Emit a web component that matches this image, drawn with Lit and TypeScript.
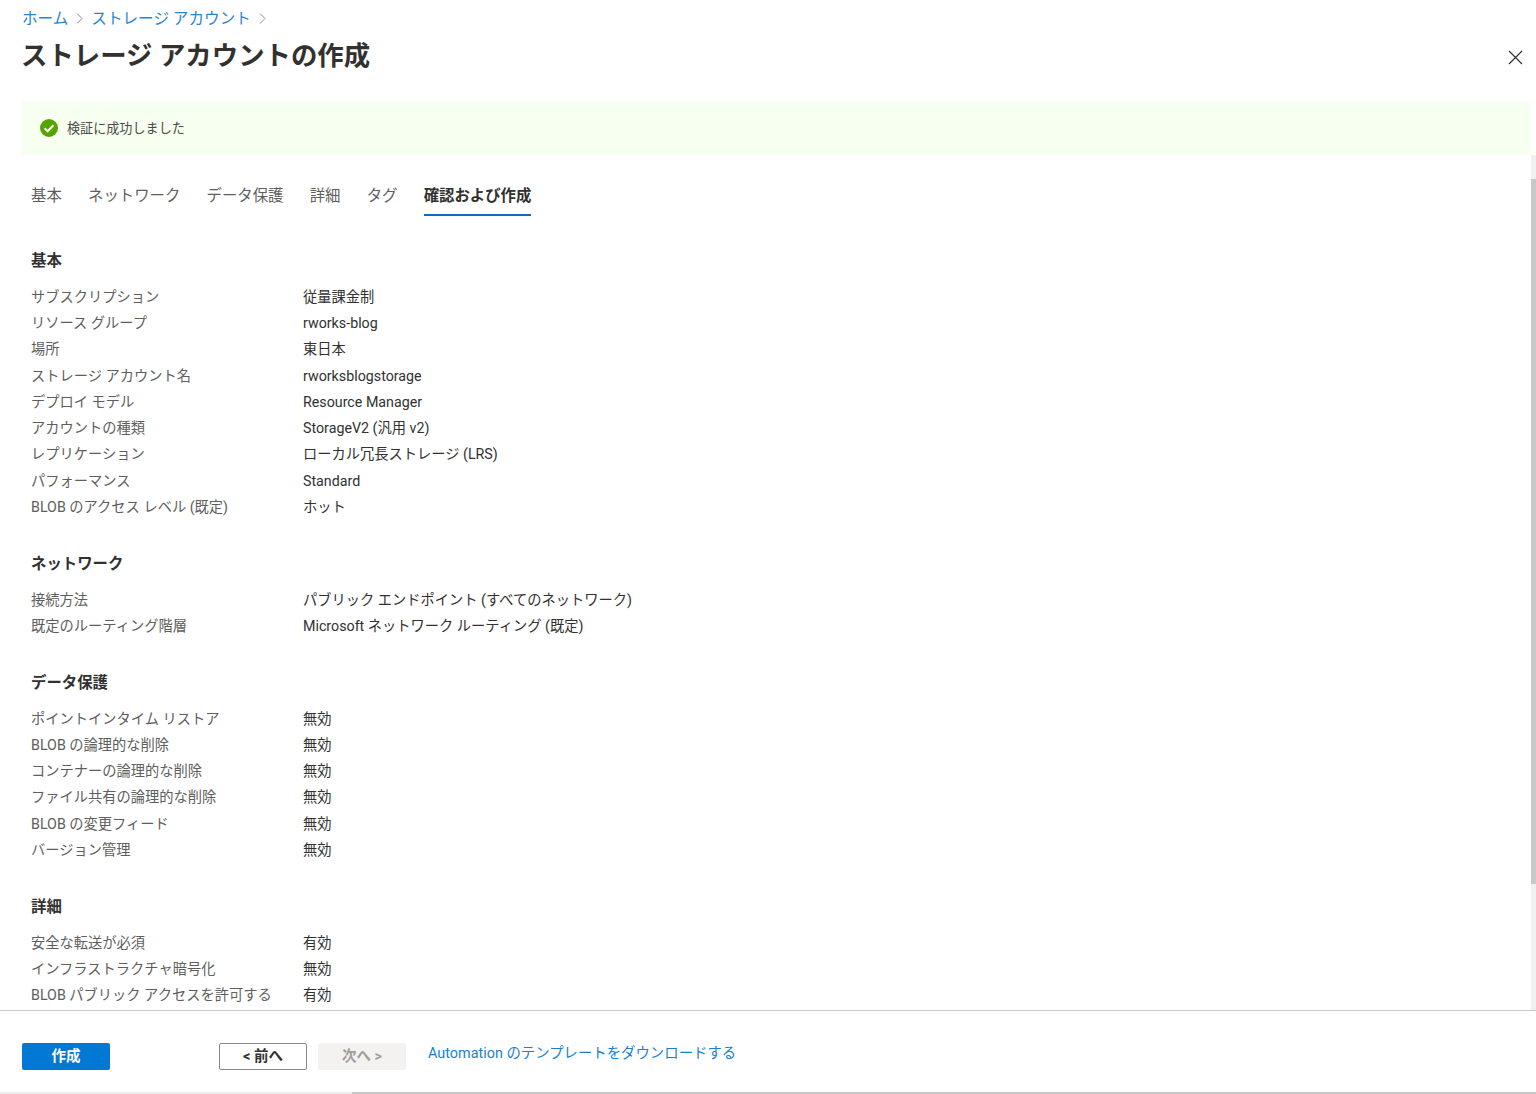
import { LitElement, html, css } from "lit";
import { customElement } from "lit/decorators.js";

type Row = [string, string];
const sections: { title: string; rows: Row[] }[] = [
  { title: "基本", rows: [
    ["サブスクリプション", "従量課金制"],
    ["リソース グループ", "rworks-blog"],
    ["場所", "東日本"],
    ["ストレージ アカウント名", "rworksblogstorage"],
    ["デプロイ モデル", "Resource Manager"],
    ["アカウントの種類", "StorageV2 (汎用 v2)"],
    ["レプリケーション", "ローカル冗長ストレージ (LRS)"],
    ["パフォーマンス", "Standard"],
    ["BLOB のアクセス レベル (既定)", "ホット"],
  ]},
  { title: "ネットワーク", rows: [
    ["接続方法", "パブリック エンドポイント (すべてのネットワーク)"],
    ["既定のルーティング階層", "Microsoft ネットワーク ルーティング (既定)"],
  ]},
  { title: "データ保護", rows: [
    ["ポイントインタイム リストア", "無効"],
    ["BLOB の論理的な削除", "無効"],
    ["コンテナーの論理的な削除", "無効"],
    ["ファイル共有の論理的な削除", "無効"],
    ["BLOB の変更フィード", "無効"],
    ["バージョン管理", "無効"],
  ]},
  { title: "詳細", rows: [
    ["安全な転送が必須", "有効"],
    ["インフラストラクチャ暗号化", "無効"],
    ["BLOB パブリック アクセスを許可する", "有効"],
  ]},
];
const tabs = ["基本", "ネットワーク", "データ保護", "詳細", "タグ", "確認および作成"];

@customElement("app-root")
export class AppRoot extends LitElement {
  static styles = css`
    :host {
      display: flex; flex-direction: column; width: 1536px; height: 1094px; overflow: hidden;
      background: #fff; color: #323130;
      font-family: Roboto, "Noto Sans CJK JP", sans-serif;
    }
    .head { padding: 0 0 0 22px; height: 101px; display: flex; flex-direction: column; position: relative; flex: none; }
    .crumbs { display: flex; align-items: center; height: 20px; margin-top: 7px; font-size: 15.6px; color: #2a84d2; }
    .crumbs svg { margin: 3px 8px 0 8px; }
    h1 { margin: 11px 0 0 -1px; font-size: 26.4px; line-height: 36px; font-weight: 700; color: #323130; }
    .close { position: absolute; right: 13px; top: 50px; }
    .banner {
      flex: none; height: 54px; margin: 0 5px 0 22px; background: #f7fff1;
      display: flex; align-items: center; padding-left: 18px; gap: 9px;
      font-size: 13.1px; line-height: 18px; color: #4a4a48;
    }
    .banner span { padding-top: 1px; }
    .main { flex: 1; min-height: 0; display: flex; }
    .content { flex: 1; min-width: 0; overflow: hidden; padding: 26px 0 0 31px; }
    .track { flex: none; width: 5px; background: #f0f0f0; padding-top: 24px; box-sizing: border-box; }
    .thumb { height: 705px; background: #c8c8c8; }
    .tabs { display: flex; gap: 26.2px; height: 35px; font-size: 15.4px; color: #605e5c; }
    .tab { height: 35px; line-height: 31px; box-sizing: border-box; }
    .tab.on { font-weight: 700; color: #323130; border-bottom: 2px solid #0f6cbd; }
    section { margin-bottom: 30.3px; }
    section:first-of-type { margin-top: 31.7px; }
    h2 { margin: 0 0 10px; font-size: 15.4px; line-height: 26px; font-weight: 700; color: #323130; }
    .row { display: grid; grid-template-columns: 272px 1fr; height: 26.3px; line-height: 26.3px; font-size: 14.25px; white-space: nowrap; }
    .k { color: #605e5c; }
    .v { color: #323130; }
    .foot {
      flex: none; height: 82px; box-sizing: border-box; border-top: 1px solid #c9c9c9;
      display: flex; align-items: flex-start; padding: 32px 0 0 22px;
    }
    .btn {
      width: 88px; height: 27px; box-sizing: border-box; border-radius: 2px;
      display: flex; align-items: center; justify-content: center; padding-bottom: 5px;
      font-size: 14.5px; font-weight: 700;
    }
    .primary { background: #0078d4; color: #fff; margin-right: 109px; }
    .secondary { background: #fff; border: 1px solid #8a8886; color: #323130; margin-right: 11px; }
    .disabled { background: #f3f2f1; color: #a19f9d; margin-right: 22px; }
    .link { font-size: 14.4px; color: #1a7fd0; line-height: 22px; }
    .bottom { flex: none; height: 2px; display: flex; }
    .bottom .a { width: 352px; background: #eeeeee; }
    .bottom .b { flex: 1; background: #c6c6c6; }
  `;

  render() {
    return html`
      <div class="head">
        <div class="crumbs">
          <span>ホーム</span>
          <svg width="7" height="11" viewBox="0 0 7 11" fill="none" stroke="#8a8886" stroke-width="1"><path d="M1 .5l5 5-5 5"/></svg>
          <span>ストレージ アカウント</span>
          <svg width="7" height="11" viewBox="0 0 7 11" fill="none" stroke="#8a8886" stroke-width="1"><path d="M1 .5l5 5-5 5"/></svg>
        </div>
        <h1>ストレージ アカウントの作成</h1>
        <svg class="close" width="15" height="15" viewBox="0 0 15 15" fill="none" stroke="#323130" stroke-width="1.2"><path d="M1 1l13 13M14 1L1 14"/></svg>
      </div>
      <div class="banner">
        <svg width="18" height="18" viewBox="0 0 18 18"><circle cx="9" cy="9" r="9" fill="#57a300"/><path d="M4.6 9.3l3 3 5.8-6" fill="none" stroke="#fff" stroke-width="2"/></svg>
        <span>検証に成功しました</span>
      </div>
      <div class="main">
        <div class="content">
          <div class="tabs">
            ${tabs.map((t, i) => html`<div class="tab ${i === tabs.length - 1 ? "on" : ""}">${t}</div>`)}
          </div>
          ${sections.map(s => html`
            <section>
              <h2>${s.title}</h2>
              ${s.rows.map(([k, v]) => html`<div class="row"><span class="k">${k}</span><span class="v">${v}</span></div>`)}
            </section>`)}
        </div>
        <div class="track"><div class="thumb"></div></div>
      </div>
      <div class="foot">
        <div class="btn primary">作成</div>
        <div class="btn secondary">&lt; 前へ</div>
        <div class="btn disabled">次へ &gt;</div>
        <div class="link">Automation のテンプレートをダウンロードする</div>
      </div>
      <div class="bottom"><div class="a"></div><div class="b"></div></div>
    `;
  }
}
